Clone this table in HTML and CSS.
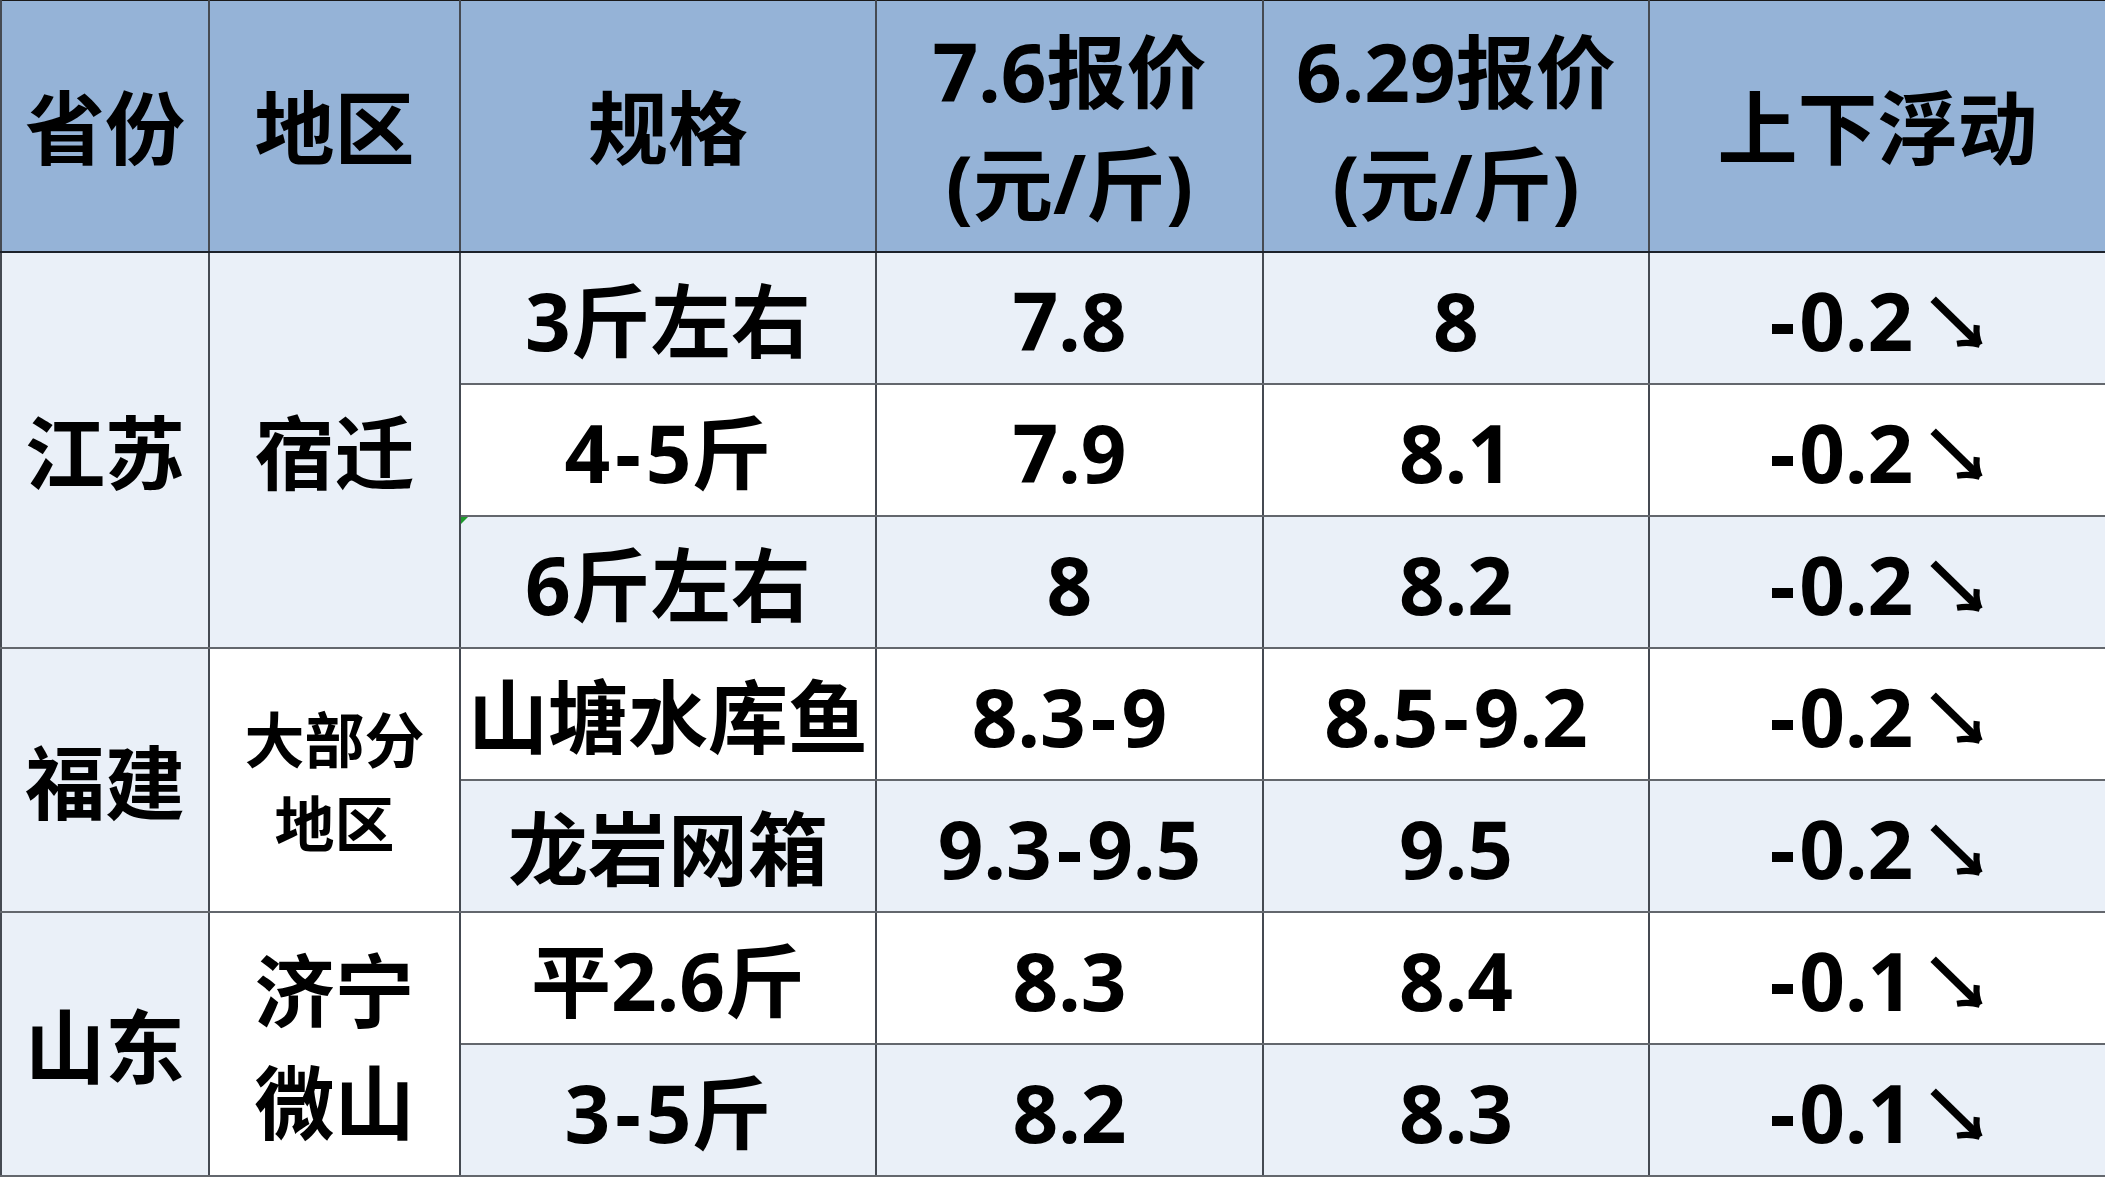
FILE: index.html
```html
<!DOCTYPE html>
<html lang="zh-CN">
<head>
<meta charset="utf-8">
<title>价格表</title>
<link rel="stylesheet" href="styles.css">
</head>
<body>
<table class="price">
  <colgroup>
    <col class="c1"><col class="c2"><col class="c3"><col class="c4"><col class="c5"><col class="c6">
  </colgroup>
  <thead>
    <tr class="head">
      <th>省份</th>
      <th>地区</th>
      <th>规格</th>
      <th>7.6报价<br>(元/斤)</th>
      <th>6.29报价<br>(元/斤)</th>
      <th>上下浮动</th>
    </tr>
  </thead>
  <tbody>
    <tr class="r odd">
      <td rowspan="3" class="lt">江苏</td>
      <td rowspan="3" class="lt">宿迁</td>
      <td>3斤左右</td><td>7.8</td><td>8</td>
      <td><span class="chg"><span class="neg">-</span>0.2<svg class="arr" viewBox="0 0 54 51"><path class="shaft" d="M4 4 L46 45"/><path d="M49 48 Q45 40 46 29"/><path d="M49 48 Q39 45 27 47"/></svg></span></td>
    </tr>
    <tr class="r even">
      <td>4<span class="dash">-</span>5斤</td><td>7.9</td><td>8.1</td>
      <td><span class="chg"><span class="neg">-</span>0.2<svg class="arr" viewBox="0 0 54 51"><path class="shaft" d="M4 4 L46 45"/><path d="M49 48 Q45 40 46 29"/><path d="M49 48 Q39 45 27 47"/></svg></span></td>
    </tr>
    <tr class="r odd">
      <td class="flag">6斤左右</td><td>8</td><td>8.2</td>
      <td><span class="chg"><span class="neg">-</span>0.2<svg class="arr" viewBox="0 0 54 51"><path class="shaft" d="M4 4 L46 45"/><path d="M49 48 Q45 40 46 29"/><path d="M49 48 Q39 45 27 47"/></svg></span></td>
    </tr>
    <tr class="r even">
      <td rowspan="2" class="lt">福建</td>
      <td rowspan="2" class="wt small">大部分<br>地区</td>
      <td>山塘水库鱼</td><td>8.3<span class="dash">-</span>9</td><td>8.5<span class="dash">-</span>9.2</td>
      <td><span class="chg"><span class="neg">-</span>0.2<svg class="arr" viewBox="0 0 54 51"><path class="shaft" d="M4 4 L46 45"/><path d="M49 48 Q45 40 46 29"/><path d="M49 48 Q39 45 27 47"/></svg></span></td>
    </tr>
    <tr class="r odd">
      <td>龙岩网箱</td><td>9.3<span class="dash">-</span>9.5</td><td>9.5</td>
      <td><span class="chg"><span class="neg">-</span>0.2<svg class="arr" viewBox="0 0 54 51"><path class="shaft" d="M4 4 L46 45"/><path d="M49 48 Q45 40 46 29"/><path d="M49 48 Q39 45 27 47"/></svg></span></td>
    </tr>
    <tr class="r even">
      <td rowspan="2" class="lt">山东</td>
      <td rowspan="2" class="wt">济宁<br>微山</td>
      <td>平2.6斤</td><td>8.3</td><td>8.4</td>
      <td><span class="chg"><span class="neg">-</span>0.1<svg class="arr" viewBox="0 0 54 51"><path class="shaft" d="M4 4 L46 45"/><path d="M49 48 Q45 40 46 29"/><path d="M49 48 Q39 45 27 47"/></svg></span></td>
    </tr>
    <tr class="r odd">
      <td>3<span class="dash">-</span>5斤</td><td>8.2</td><td>8.3</td>
      <td><span class="chg"><span class="neg">-</span>0.1<svg class="arr" viewBox="0 0 54 51"><path class="shaft" d="M4 4 L46 45"/><path d="M49 48 Q45 40 46 29"/><path d="M49 48 Q39 45 27 47"/></svg></span></td>
    </tr>
  </tbody>
</table>
</body>
</html>
```

FILE: styles.css
```css
html, body {
  margin: 0;
  padding: 0;
  background: #ffffff;
}

body {
  width: 2105px;
  height: 1178px;
  overflow: hidden;
}

.price {
  width: 2105px;
  table-layout: fixed;
  border-collapse: collapse;
  font-family: "Noto Sans", "Noto Sans CJK SC", sans-serif;
  font-weight: 700;
  color: #000000;
  border-top: 1px solid #1a1a1a;
  border-left: 1px solid #333333;
  border-right: 2px solid #111111;
}

.c1 { width: 208px; }
.c2 { width: 251px; }
.c3 { width: 416px; }
.c4 { width: 387px; }
.c5 { width: 386px; }
.c6 { width: 457px; }

.price th,
.price td {
  padding: 0;
  text-align: center;
  vertical-align: middle;
  font-size: 80px;
  border-left: 2px solid #454a52;
  border-right: 2px solid #454a52;
  white-space: nowrap;
}

.head {
  height: 251px;
  background: #95b3d7;
}

.head th {
  font-weight: 700;
  line-height: 1.4;
  border-bottom: 2px solid #1c222b;
  padding-top: 2px;
}

.r {
  height: 132px;
}

.r td {
  line-height: 1;
  border-top: 2px solid #63676d;
  border-bottom: 2px solid #63676d;
  padding-top: 4px;
}

.odd { background: #eaf0f8; }
.even { background: #ffffff; }

.price td.lt { background: #eaf0f8; line-height: 1.4; }
.price td.wt { background: #ffffff; line-height: 1.4; }
.price td.small { font-size: 60px; }

.dash {
  display: inline-block;
  padding: 0 5px;
}

.neg {
  display: inline-block;
  padding-right: 4px;
}

.price td.flag {
  position: relative;
}

.price td.flag::before {
  content: "";
  position: absolute;
  left: 0;
  top: 0;
  width: 0;
  height: 0;
  border-top: 7px solid #1d9a2c;
  border-right: 7px solid transparent;
}

.chg {
  display: inline-flex;
  align-items: flex-end;
}

.arr {
  width: 56px;
  height: 53px;
  margin-left: 16px;
  margin-bottom: 12px;
  fill: none;
  stroke: #000000;
  stroke-width: 6;
  stroke-linecap: butt;
}

.arr .shaft {
  stroke-width: 7.5;
}
```
